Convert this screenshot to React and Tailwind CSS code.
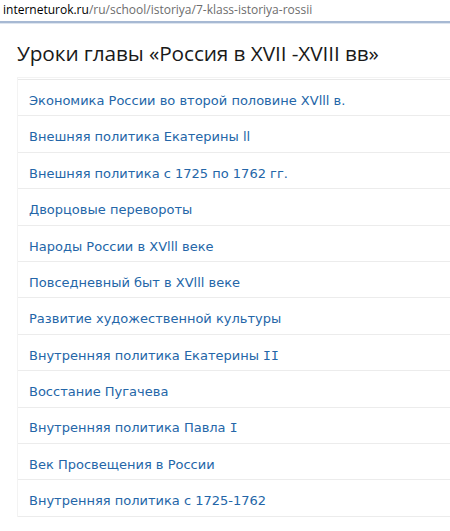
import React from 'react';

const lessons = [
    'Экономика России во второй половине XVlll в.',
    'Внешняя политика Екатерины ll',
    'Внешняя политика с 1725 по 1762 гг.',
    'Дворцовые перевороты',
    'Народы России в XVlll веке',
    'Повседневный быт в XVlll веке',
    'Развитие художественной культуры',
    <>Внутренняя политика Екатерины <span className="font-['DejaVu_Sans_Mono',monospace]">II</span></>,
    'Восстание Пугачева',
    <>Внутренняя политика Павла <span className="font-['DejaVu_Sans_Mono',monospace]">I</span></>,
    'Век Просвещения в России',
    'Внутренняя политика с 1725-1762',
];

export default function App() {
    return (
        <div className="w-[450px] h-[531px] bg-white overflow-hidden">
            {/* Address bar */}
            <div className="h-[21px] pl-[3px] pt-[1px] text-[12px] leading-[18px] font-['Open_Sans',sans-serif]">
                <span className="text-black">interneturok.ru</span>
                <span className="text-[#6d6d6d]">/ru/school/istoriya/7-klass-istoriya-rossii</span>
            </div>
            <div className="h-[2px] bg-[#a7b9d3]" />
            <div className="h-px bg-[#dde5ef]" />

            <div className="pl-[17px] pt-[16px]">
                <h1 className="text-[20.8px] leading-[26px] text-[#1a1a1a] font-['Open_Sans',sans-serif] tracking-[-0.1px]">
                    Уроки главы «Россия в XVII -XVIII вв»
                </h1>

                <ul className="mt-[11px] border-l border-t border-[#f3f3f3] font-['DejaVu_Sans',Verdana,sans-serif] text-[13px] text-[#2466a8]">
                    <li className="h-px mt-px bg-[#e9e9e9]" />
                    {lessons.map((title, i) => (
                        <li key={i} className="h-[36.4px] flex items-center pt-[6px] pl-[11px] border-b border-[#ececec]">
                            <span>{title}</span>
                        </li>
                    ))}
                </ul>
            </div>
        </div>
    );
}
